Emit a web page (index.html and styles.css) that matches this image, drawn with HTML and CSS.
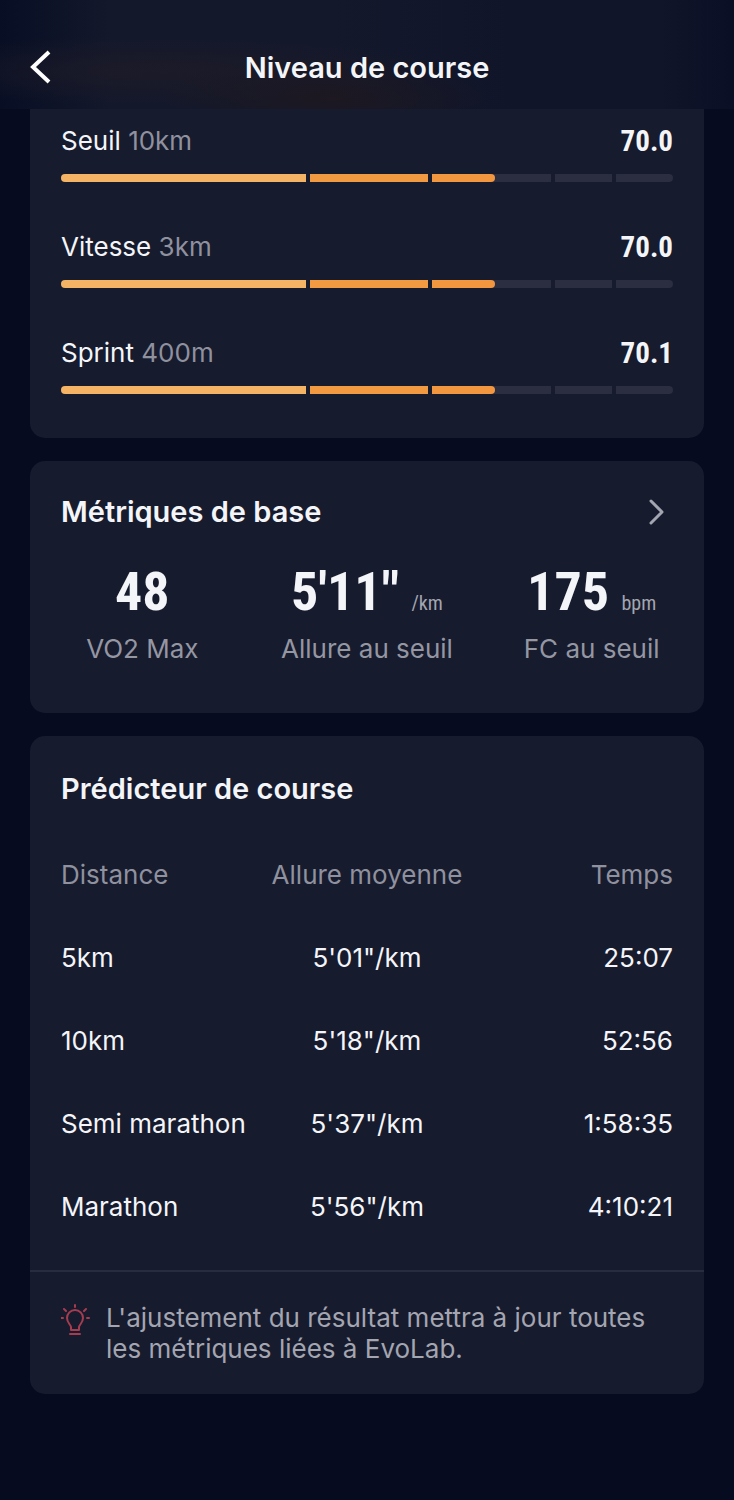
FILE: index.html
```html
<!DOCTYPE html>
<html lang="fr">
<head>
  <meta charset="UTF-8" />
  <meta name="viewport" content="width=device-width, initial-scale=1.0"/>
  <title>Niveau de course</title>
  <link rel="stylesheet" href="styles.css">
</head>
<body>
  <header>
    <button type="button" class="back" aria-label="Retour">
      <svg width="24" height="36" viewBox="0 0 24 36" fill="none" stroke="#fff" stroke-width="4">
        <path d="M20 2 L4 17 L20 32"/>
      </svg>
    </button>
    <h1>Niveau de course</h1>
  </header>
  <main>
    <section class="card levels">
      <div class="level">
        <div class="level-text">
          <span>Seuil <small>10km</small></span>
          <strong>70.0</strong>
        </div>
        <div class="bar">
          <span class="full light"></span>
          <span class="full"></span>
          <span><i style="width: 53%"></i></span>
          <span></span>
          <span></span>
        </div>
      </div>
      <div class="level">
        <div class="level-text">
          <span>Vitesse <small>3km</small></span>
          <strong>70.0</strong>
        </div>
        <div class="bar">
          <span class="full light"></span>
          <span class="full"></span>
          <span><i style="width: 53%"></i></span>
          <span></span>
          <span></span>
        </div>
      </div>
      <div class="level">
        <div class="level-text">
          <span>Sprint <small>400m</small></span>
          <strong>70.1</strong>
        </div>
        <div class="bar">
          <span class="full light"></span>
          <span class="full"></span>
          <span><i style="width: 53%"></i></span>
          <span></span>
          <span></span>
        </div>
      </div>
    </section>

    <section class="card">
      <a class="card-title" href="#metriques">
        <h2>Métriques de base</h2>
        <svg width="18" height="28" viewBox="0 0 18 28" fill="none" stroke="#a3a5b0" stroke-width="3" stroke-linecap="round" stroke-linejoin="round">
          <path d="M3 3 L14 14 L3 25"/>
        </svg>
      </a>
      <div class="metrics" id="metriques">
        <div class="metric">
          <div class="value">48</div>
          <div class="label">VO2 Max</div>
        </div>
        <div class="metric">
          <div class="value">5'11" <small>/km</small></div>
          <div class="label">Allure au seuil</div>
        </div>
        <div class="metric">
          <div class="value">175 <small>bpm</small></div>
          <div class="label">FC au seuil</div>
        </div>
      </div>
    </section>

    <section class="card predictor">
      <div class="card-title">
        <h2>Prédicteur de course</h2>
      </div>
      <table>
        <thead>
          <tr><th>Distance</th><th>Allure moyenne</th><th>Temps</th></tr>
        </thead>
        <tbody>
          <tr><td>5km</td><td>5'01"/km</td><td>25:07</td></tr>
          <tr><td>10km</td><td>5'18"/km</td><td>52:56</td></tr>
          <tr><td>Semi marathon</td><td>5'37"/km</td><td>1:58:35</td></tr>
          <tr><td>Marathon</td><td>5'56"/km</td><td>4:10:21</td></tr>
        </tbody>
      </table>
      <div class="tip">
        <svg width="30" height="34" viewBox="0 0 30 34" fill="none" stroke="#a53c50" stroke-width="2" stroke-linecap="round" stroke-linejoin="round">
          <path d="M10 28 V25 C10 23 6 21 6 16 A8 8 0 0 1 22 16 C22 21 18 23 18 25 V28 Z"/>
          <path d="M9 32 H19"/>
          <path d="M14 3 V5 M3 7 L5 9 M25 7 L23 9 M0 16 H2 M26 16 H28"/>
        </svg>
        <p>L'ajustement du résultat mettra à jour toutes les métriques liées à EvoLab.</p>
      </div>
    </section>
  </main>
</body>
</html>
```
FILE: styles.css
```css
* {
  box-sizing: border-box;
}
body {
  font-family: Inter, sans-serif;
  font-size: 26px;
  line-height: 34px;
  background-color: #060b20;
  color: #f4f5f8;
  margin: 0;
}
header {
  display: grid;
  grid-template-columns: 60px 1fr 60px;
  align-items: center;
  padding: 48px 0 21px;
  background:
    radial-gradient(ellipse at 45% 90%, rgba(30, 24, 32, 0.9), transparent 30%),
    radial-gradient(ellipse at 22% 65%, rgba(29, 27, 40, 0.9), transparent 35%),
    linear-gradient(90deg, #080e24, #13182b 15%, #13182b 45%, #10152a 70%, #101529 90%, #0a0f26);
}
h1, h2 {
  font-size: 29px;
  line-height: 40px;
  font-weight: 600;
  margin: 0;
}
h1 {
  text-align: center;
}
.back {
  display: flex;
  padding: 0 0 0 29px;
  background: none;
  border: none;
  cursor: pointer;
}
main {
  display: grid;
  gap: 23px;
  padding: 0 30px 106px;
}
.card {
  background-color: #171b2e;
  border-radius: 15px;
}
.levels {
  display: grid;
  gap: 48px;
  padding: 15px 31px 44px;
  border-radius: 0 0 15px 15px;
}
.level-text {
  display: flex;
  justify-content: space-between;
  margin-bottom: 16px;
}
.level-text small {
  font-size: 26px;
  color: #8f919e;
}
.level-text strong,
.value {
  font-family: "Roboto Condensed", "Liberation Sans Narrow", sans-serif;
  font-weight: 700;
}
.level-text strong {
  font-size: 29px;
}
.bar {
  display: grid;
  grid-template-columns: 4fr 2fr 2fr 1fr 1fr;
  border-radius: 4px;
  overflow: hidden;
}
.bar span {
  height: 8px;
  background-color: #2b2e41;
}
.bar span + span {
  border-left: 4px solid #171b2e;
}
.bar .full {
  background-color: #f29a42;
}
.bar .light {
  background-color: #f5b465;
}
.bar i {
  display: block;
  height: 8px;
  border-radius: 0 4px 4px 0;
  background-color: #f29640;
}
.card-title {
  display: flex;
  justify-content: space-between;
  align-items: center;
  padding: 31px 38px 0 31px;
  color: inherit;
  text-decoration: none;
}
.metrics {
  display: grid;
  grid-template-columns: repeat(3, 1fr);
  padding: 28px 0 47px;
  text-align: center;
}
.value {
  font-size: 54px;
  line-height: 64px;
  margin-bottom: 8px;
}
.value small {
  font-size: 20px;
  line-height: 20px;
  font-weight: 400;
  color: #a3a5b0;
}
.label {
  color: #9496a2;
}
.predictor {
  padding-top: 2px;
}
table {
  width: 100%;
  table-layout: fixed;
  border-collapse: collapse;
  margin-top: 24px;
}
th, td {
  height: 83px;
  padding: 0;
  font-weight: 400;
  text-align: center;
}
th {
  color: #8f919e;
}
th:first-child, td:first-child {
  padding-left: 31px;
  text-align: left;
}
th:last-child, td:last-child {
  padding-right: 31px;
  text-align: right;
}
.tip {
  display: flex;
  gap: 15px;
  margin-top: 22px;
  padding: 30px 31px;
  border-top: 2px solid #292c3e;
  line-height: 31px;
  color: #a3a5b0;
}
.tip svg {
  flex-shrink: 0;
}
.tip p {
  margin: 0;
}
```
